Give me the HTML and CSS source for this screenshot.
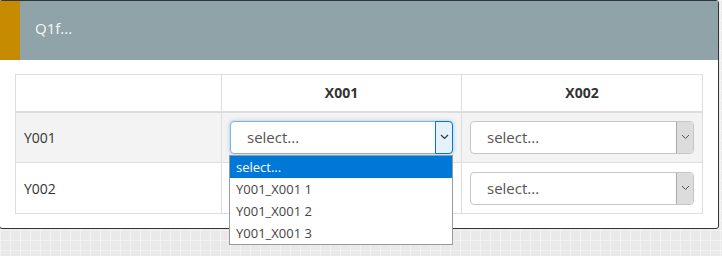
FILE: index.html
```html
<!DOCTYPE html>
<html lang="en">
<head>
<meta charset="UTF-8" />
<title>Q1f</title>
<link rel="stylesheet" href="styles.css">
</head>
<body>
  <div class="panel">
    <div class="panel-head">Q1f...</div>
    <div class="panel-body">
      <table class="grid">
        <thead>
          <tr>
            <th class="col-label"></th>
            <th class="col-a">X001</th>
            <th class="col-b">X002</th>
          </tr>
        </thead>
        <tbody>
          <tr class="striped">
            <td>Y001</td>
            <td>
              <div class="sel focused">
                <span class="sel-text">select...</span>
                <span class="sel-arrow"><svg width="9" height="6" viewBox="0 0 9 6"><path d="M1 1l3.5 3.5L8 1" fill="none" stroke="#333" stroke-width="1.2"/></svg></span>
                <ul class="sel-list">
                  <li class="active">select...</li>
                  <li>Y001_X001 1</li>
                  <li>Y001_X001 2</li>
                  <li>Y001_X001 3</li>
                </ul>
              </div>
            </td>
            <td>
              <div class="sel">
                <span class="sel-text">select...</span>
                <span class="sel-arrow"><svg width="9" height="6" viewBox="0 0 9 6"><path d="M1 1l3.5 3.5L8 1" fill="none" stroke="#555" stroke-width="1"/></svg></span>
              </div>
            </td>
          </tr>
          <tr>
            <td>Y002</td>
            <td>
              <!-- sits under the open list above -->
              <div class="sel covered">
                <span class="sel-text">select...</span>
                <span class="sel-arrow"><svg width="9" height="6" viewBox="0 0 9 6"><path d="M1 1l3.5 3.5L8 1" fill="none" stroke="#555" stroke-width="1"/></svg></span>
              </div>
            </td>
            <td>
              <div class="sel">
                <span class="sel-text">select...</span>
                <span class="sel-arrow"><svg width="9" height="6" viewBox="0 0 9 6"><path d="M1 1l3.5 3.5L8 1" fill="none" stroke="#555" stroke-width="1"/></svg></span>
              </div>
            </td>
          </tr>
        </tbody>
      </table>
    </div>
  </div>
</body>
</html>
```
FILE: styles.css
```css
* {
  box-sizing: border-box;
}
html, body {
  margin: 0;
  padding: 0;
}
body {
  font-family: 'Open Sans', 'Segoe UI', sans-serif;
  color: #333;
  background-color: #e9e9e9;
  background-image:
    linear-gradient(90deg, #f2f2f2 1px, transparent 1px),
    linear-gradient(#f2f2f2 1px, transparent 1px);
  background-size: 10px 10px;
  height: 256px;
  overflow: hidden;
}
.panel {
  width: 720px;
  height: 229px;
  margin-left: -1px;
  background: #fff;
  border: 1px solid #2c363b;
  border-radius: 3px;
}
.panel-head {
  height: 59px;
  background: #8fa3a9;
  border-left: 20px solid #c68b00;
  color: #f7f7f7;
  font-size: 15px;
  line-height: 54px;
  padding-left: 15px;
}
.panel-body {
  padding: 14px 15px 0;
}
.grid {
  width: 688px;
  border-collapse: collapse;
  font-size: 14px;
}
.grid th, .grid td {
  border: 1px solid #ddd;
  padding: 8px;
  vertical-align: middle;
}
.grid th {
  height: 37px;
  font-weight: 700;
  text-align: center;
  border-bottom-width: 2px;
}
.col-label { width: 206px; }
.col-a { width: 240px; }
.grid td {
  height: 51px;
}
.striped td {
  background: #f3f3f3;
}
.sel {
  position: relative;
  display: flex;
  height: 33px;
  background: #fff;
  border: 1px solid #c6c6c6;
  border-radius: 4px;
}
.sel-text {
  flex: 1;
  padding-left: 16px;
  font-size: 15px;
  line-height: 31px;
  color: #555;
}
.sel.covered .sel-text {
  visibility: hidden;
}
.sel-arrow {
  width: 17px;
  display: flex;
  align-items: center;
  justify-content: center;
  background: #dcdcdc;
  border-left: 1px solid #a9a9a9;
  border-radius: 0 3px 3px 0;
}
.sel.focused {
  border-color: #7fb0e0;
  box-shadow: 0 0 4px rgba(102, 175, 233, 0.6);
}
.sel.focused .sel-arrow {
  background: #e5f1fb;
  border: 1px solid #0078d7;
  margin: -1px -1px -1px 0;
  width: 18px;
  border-radius: 0 4px 4px 0;
}
.sel-list {
  position: absolute;
  top: 33px;
  left: -2px;
  width: 224px;
  margin: 0;
  padding: 0;
  list-style: none;
  background: #fff;
  border: 1px solid #9a9a9a;
  z-index: 2;
}
.sel-list li {
  height: 22px;
  line-height: 22px;
  padding-left: 6px;
  font-size: 13px;
  color: #444;
}
.sel-list li.active {
  background: #0078d7;
  color: #fff;
}
```
